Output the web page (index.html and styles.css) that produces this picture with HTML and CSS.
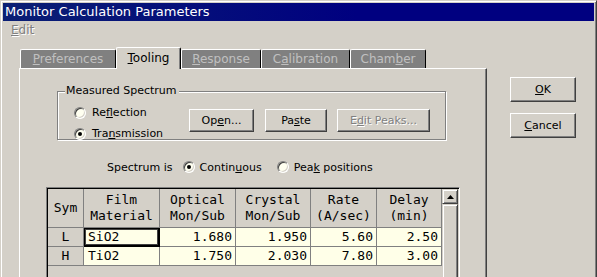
FILE: index.html
```html
<!DOCTYPE html>
<html>
<head>
<meta charset="utf-8">
<link rel="stylesheet" href="styles.css">
</head>
<body>
<div class="window">
  <div class="titlebar"><span class="title">Monitor Calculation Parameters</span></div>
  <div class="menubar"><span class="menu disabled"><u>E</u>dit</span></div>
  <div class="body">
    <div class="tabs">
      <div class="tabstrip">
        <div class="tab t-pref"><u>P</u>references</div>
        <div class="tab selected t-tool"><u>T</u>ooling</div>
        <div class="tab t-resp"><u>R</u>esponse</div>
        <div class="tab t-cal">C<u>a</u>libration</div>
        <div class="tab t-ch">Cham<u>b</u>er</div>
      </div>
      <div class="panel">
        <div class="group">
          <span class="legend">Measured Spectrum</span>
          <div class="radios">
            <div class="radio"><span class="rbox"></span><span>Re<u>f</u>lection</span></div>
            <div class="radio"><span class="rbox on"></span><span>Tra<u>n</u>smission</span></div>
          </div>
          <div class="gbtns">
            <div class="btn b-open">Op<u>e</u>n...</div>
            <div class="btn b-paste">Pa<u>s</u>te</div>
            <div class="btn b-edit disabled">E<u>d</u>it Peaks...</div>
          </div>
        </div>
        <div class="specrow">
          <span class="speclabel">Spectrum is</span>
          <div class="radio r-cont"><span class="rbox on"></span><span>Contin<u>u</u>ous</span></div>
          <div class="radio r-peak"><span class="rbox"></span><span>Pea<u>k</u> positions</span></div>
        </div>
        <div class="table">
          <div class="grid">
            <div class="hc">Sym</div>
            <div class="hc">Film<br>Material</div>
            <div class="hc">Optical<br>Mon/Sub</div>
            <div class="hc">Crystal<br>Mon/Sub</div>
            <div class="hc">Rate<br>(A/sec)</div>
            <div class="hc">Delay<br>(min)</div>

            <div class="sc">L</div>
            <div class="dc txt focus">SiO2</div>
            <div class="dc">1.680</div>
            <div class="dc">1.950</div>
            <div class="dc">5.60</div>
            <div class="dc">2.50</div>

            <div class="sc">H</div>
            <div class="dc txt">TiO2</div>
            <div class="dc">1.750</div>
            <div class="dc">2.030</div>
            <div class="dc">7.80</div>
            <div class="dc">3.00</div>
          </div>
          <div class="vscroll">
            <div class="sbtn"><svg width="7" height="4" viewBox="0 0 7 4"><path d="M3.5 0 L7 4 L0 4 Z" fill="#000"/></svg></div>
            <div class="thumb"></div>
          </div>
        </div>
      </div>
    </div>
    <div class="side">
      <div class="btn b-side"><u>O</u>K</div>
      <div class="btn b-side"><u>C</u>ancel</div>
    </div>
  </div>
</div>
</body>
</html>
```

FILE: styles.css
```css
* { box-sizing: border-box; }
html, body { margin: 0; padding: 0; }
body {
  width: 597px;
  height: 277px;
  overflow: hidden;
  background: #d4d0c8;
  font-family: "DejaVu Sans", Verdana, sans-serif;
  font-size: 11px;
  color: #000;
}
u { text-decoration: underline; text-underline-offset: 1px; }

.window {
  width: 597px;
  height: 320px;
  background: #d4d0c8;
  border: 1px solid;
  border-color: #d4d0c8 #404040 #404040 #d4d0c8;
  box-shadow: inset 1px 1px 0 #fff, inset -1px -1px 0 #808080;
  padding: 2px;
}

.titlebar {
  height: 18px;
  background: linear-gradient(to right, #0a1f74, #000080 60%);
  color: #fff;
  font-size: 13px;
  line-height: 18px;
  padding-left: 2px;
  white-space: nowrap;
}

.menubar {
  height: 19px;
  line-height: 19px;
  padding-left: 8px;
  font-size: 12px;
}
.disabled { color: #808080; text-shadow: 1px 1px 0 #fff; }

.body {
  display: flex;
  padding-top: 7px;
  padding-left: 16px;
}

.tabs { width: 468px; }
.tabstrip {
  display: flex;
  align-items: flex-end;
  height: 21px;
  padding-left: 1px;
}
.tab {
  height: 19px;
  line-height: 18px;
  text-align: center;
  font-size: 12px;
  background: #808080;
  color: #c0c0c0;
  border-top: 1px solid #fff;
  border-left: 1px solid #fff;
  border-right: 1px solid #000;
  border-top-left-radius: 2px;
  border-top-right-radius: 2px;
  white-space: nowrap;
}
.tab.selected {
  height: 22px;
  margin-bottom: -1px;
  background: #d4d0c8;
  color: #000;
  position: relative;
  z-index: 1;
  line-height: 20px;
  box-shadow: inset -1px 0 0 #808080;
}
.t-pref { width: 96px; }
.t-tool { width: 65px; }
.t-resp { width: 80px; }
.t-cal { width: 89px; }
.t-ch { width: 76px; }

.panel {
  height: 240px;
  border-top: 1px solid #fff;
  border-left: 1px solid #fff;
  border-right: 1px solid #404040;
  box-shadow: inset -1px 0 0 #808080;
  padding-top: 22px;
}

.group {
  position: relative;
  margin-left: 37px;
  width: 389px;
  height: 49px;
  border: 1px solid #808080;
  box-shadow: 1px 1px 0 #fff, inset 1px 1px 0 #fff;
  display: flex;
  padding: 10px 0 0 16px;
}
.legend {
  position: absolute;
  top: -8px;
  left: 7px;
  padding: 0 2px 0 1px;
  background: #d4d0c8;
  line-height: 14px;
}
.radios { width: 115px; }
.radio {
  display: flex;
  align-items: center;
  height: 21px;
  white-space: nowrap;
}
.rbox {
  width: 12px;
  height: 12px;
  border-radius: 50%;
  margin-right: 6px;
  flex: none;
  background: #fffff0;
  border: 1px solid;
  border-color: #808080 #fff #fff #808080;
  box-shadow: inset 1px 1px 0 #404040, inset -1px -1px 0 #d4d0c8;
  display: flex;
  align-items: center;
  justify-content: center;
}
.rbox.on::after {
  content: "";
  width: 4px;
  height: 4px;
  border-radius: 50%;
  background: #000;
}

.gbtns { display: flex; padding-top: 7px; }
.btn {
  height: 23px;
  line-height: 21px;
  text-align: center;
  background: #d4d0c8;
  border: 1px solid;
  border-color: #fff #404040 #404040 #fff;
  box-shadow: inset -1px -1px 0 #808080;
  white-space: nowrap;
}
.b-open { width: 65px; }
.b-paste { width: 62px; margin-left: 11px; }
.b-edit { width: 93px; margin-left: 10px; }

.specrow {
  display: flex;
  align-items: center;
  height: 20px;
  margin-top: 17px;
  padding-left: 87px;
}
.r-cont { margin-left: 10px; }
.r-cont .rbox { margin-right: 5px; }
.r-peak { margin-left: 15px; }
.r-peak .rbox { margin-right: 5px; }

.table {
  display: flex;
  margin-top: 10px;
  margin-left: 26px;
  width: 414px;
  height: 120px;
  border: 1px solid;
  border-color: #808080 #fff #fff #808080;
  box-shadow: inset 1px 1px 0 #000, inset -1px -1px 0 #d4d0c8;
  padding: 1px;
}
.grid {
  display: grid;
  grid-template-columns: 36px 76px 76px 75px 66px 65px;
  grid-template-rows: 39px 19px 19px;
  align-content: start;
  width: 394px;
  font-family: "DejaVu Sans Mono", "Liberation Mono", monospace;
  font-size: 13px;
}
.hc, .sc, .dc {
  border-right: 1px solid #808080;
  border-bottom: 1px solid #808080;
}
.hc {
  display: flex;
  align-items: center;
  justify-content: center;
  text-align: center;
  line-height: 16px;
  padding-bottom: 1px;
}
.sc {
  text-align: center;
  line-height: 18px;
}
.dc {
  background: #ffffe8;
  text-align: right;
  line-height: 18px;
  padding-right: 3px;
}
.dc.txt { text-align: left; padding-left: 4px; }
.dc.focus { box-shadow: inset 0 0 0 1px #000, inset 0 0 0 2px #404040; border-color: #000; }

.vscroll {
  width: 16px;
  display: flex;
  flex-direction: column;
}
.sbtn {
  height: 15px;
  border: 1px solid;
  border-color: #d4d0c8 #404040 #404040 #d4d0c8;
  box-shadow: inset 1px 1px 0 #fff, inset -1px -1px 0 #808080;
  display: flex;
  align-items: center;
  justify-content: center;
}
.thumb {
  flex: 1;
  border: 1px solid;
  border-color: #d4d0c8 #404040 #404040 #d4d0c8;
  box-shadow: inset 1px 1px 0 #fff, inset -1px -1px 0 #808080;
}

.side {
  margin-left: 23px;
  padding-top: 30px;
  display: flex;
  flex-direction: column;
  gap: 11px;
}
.b-side { width: 66px; height: 25px; line-height: 23px; }
```
